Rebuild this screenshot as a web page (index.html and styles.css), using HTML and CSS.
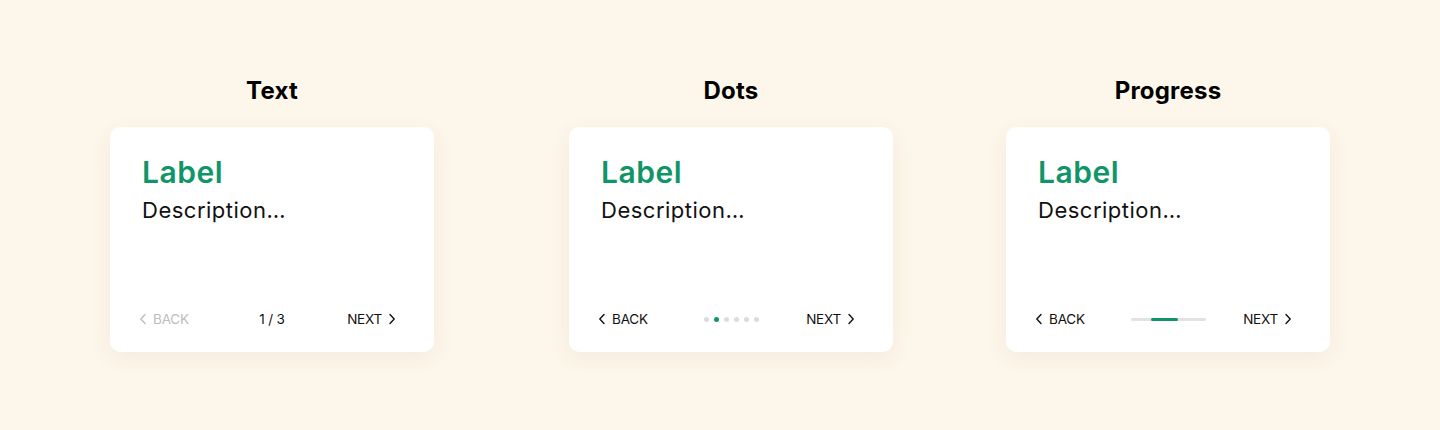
FILE: index.html
```html
<!DOCTYPE html>
<html lang="en">
<head>
<meta charset="utf-8">
<title>Pagination variants</title>
<link rel="stylesheet" href="styles.css">
</head>
<body>
<main class="page">
  <section class="col col-text">
    <h2 class="col-title">Text</h2>
    <div class="card">
      <div class="card-label">Label</div>
      <div class="card-desc">Description…</div>
      <div class="card-footer">
        <button class="nav nav-back is-disabled" type="button">
          <svg class="chev" width="8" height="12" viewBox="0 0 8 12"><polyline points="6,1.5 1.8,6 6,10.5" fill="none" stroke="currentColor" stroke-width="1.4" stroke-linecap="round" stroke-linejoin="round"/></svg>
          <span>BACK</span>
        </button>
        <div class="pager-text">1 / 3</div>
        <button class="nav nav-next" type="button">
          <span>NEXT</span>
          <svg class="chev" width="8" height="12" viewBox="0 0 8 12"><polyline points="2,1.5 6.2,6 2,10.5" fill="none" stroke="currentColor" stroke-width="1.4" stroke-linecap="round" stroke-linejoin="round"/></svg>
        </button>
      </div>
    </div>
  </section>

  <section class="col col-dots">
    <h2 class="col-title">Dots</h2>
    <div class="card">
      <div class="card-label">Label</div>
      <div class="card-desc">Description…</div>
      <div class="card-footer">
        <button class="nav nav-back" type="button">
          <svg class="chev" width="8" height="12" viewBox="0 0 8 12"><polyline points="6,1.5 1.8,6 6,10.5" fill="none" stroke="currentColor" stroke-width="1.4" stroke-linecap="round" stroke-linejoin="round"/></svg>
          <span>BACK</span>
        </button>
        <div class="pager-dots">
          <span class="dot"></span>
          <span class="dot is-active"></span>
          <span class="dot"></span>
          <span class="dot"></span>
          <span class="dot"></span>
          <span class="dot"></span>
        </div>
        <button class="nav nav-next" type="button">
          <span>NEXT</span>
          <svg class="chev" width="8" height="12" viewBox="0 0 8 12"><polyline points="2,1.5 6.2,6 2,10.5" fill="none" stroke="currentColor" stroke-width="1.4" stroke-linecap="round" stroke-linejoin="round"/></svg>
        </button>
      </div>
    </div>
  </section>

  <section class="col col-progress">
    <h2 class="col-title">Progress</h2>
    <div class="card">
      <div class="card-label">Label</div>
      <div class="card-desc">Description…</div>
      <div class="card-footer">
        <button class="nav nav-back" type="button">
          <svg class="chev" width="8" height="12" viewBox="0 0 8 12"><polyline points="6,1.5 1.8,6 6,10.5" fill="none" stroke="currentColor" stroke-width="1.4" stroke-linecap="round" stroke-linejoin="round"/></svg>
          <span>BACK</span>
        </button>
        <div class="pager-progress">
          <span class="progress-fill"></span>
        </div>
        <button class="nav nav-next" type="button">
          <span>NEXT</span>
          <svg class="chev" width="8" height="12" viewBox="0 0 8 12"><polyline points="2,1.5 6.2,6 2,10.5" fill="none" stroke="currentColor" stroke-width="1.4" stroke-linecap="round" stroke-linejoin="round"/></svg>
        </button>
      </div>
    </div>
  </section>
</main>
</body>
</html>
```

FILE: styles.css
```css
* {
  box-sizing: border-box;
}

html, body {
  margin: 0;
  padding: 0;
}

body {
  width: 1440px;
  height: 430px;
  background: #fdf6ea;
  font-family: Inter, "Noto Sans", "DejaVu Sans", sans-serif;
  color: #111;
  overflow: hidden;
}

.page {
  display: flex;
  align-items: flex-start;
  padding: 76px 0 0 110px;
}

.col {
  display: flex;
  flex-direction: column;
  align-items: center;
  width: 324px;
}

.col-dots {
  margin-left: 135px;
}

.col-progress {
  margin-left: 113px;
}

.col-title {
  margin: 0 0 21px;
  font-size: 24px;
  line-height: 30px;
  font-weight: 700;
  color: #000;
  letter-spacing: 0.2px;
}

.card {
  width: 324px;
  height: 225px;
  background: #fff;
  border-radius: 10px;
  box-shadow: 0 6px 22px rgba(120, 90, 40, 0.07);
  display: flex;
  flex-direction: column;
  padding: 27px 31px 23px 31px;
}

.card-label {
  margin-left: 1px;
  font-size: 30px;
  line-height: 36px;
  font-weight: 600;
  color: #0f9567;
  letter-spacing: 0.5px;
}

.card-desc {
  margin-left: 1px;
  margin-top: 6px;
  font-size: 22px;
  line-height: 28px;
  font-weight: 400;
  color: #111;
  letter-spacing: 0.5px;
}

.card-footer {
  margin-top: auto;
  height: 20px;
  display: grid;
  grid-template-columns: 1fr auto 1fr;
  align-items: center;
}

.nav {
  display: flex;
  align-items: center;
  gap: 6px;
  padding: 0;
  border: 0;
  background: none;
  font-family: inherit;
  font-size: 13.5px;
  line-height: 20px;
  color: #111;
  letter-spacing: -0.2px;
  cursor: pointer;
}

.nav-back {
  justify-self: start;
  margin-left: -2px;
}

.nav-next {
  justify-self: end;
  margin-right: 7px;
}

.nav.is-disabled {
  color: #bdbdbd;
}

.chev {
  display: block;
  flex: none;
}

.pager-text {
  font-size: 13.5px;
  line-height: 20px;
  color: #111;
  letter-spacing: -0.2px;
}

.pager-dots {
  display: flex;
  align-items: center;
  gap: 5px;
}

.dot {
  width: 5px;
  height: 5px;
  border-radius: 50%;
  background: #dcdcdc;
}

.dot.is-active {
  background: #0f9567;
}

.pager-progress {
  width: 75px;
  height: 3px;
  background: #e2e2e2;
  border-radius: 2px;
  display: flex;
  padding-left: 20px;
}

.progress-fill {
  width: 27px;
  height: 3px;
  background: #0f9567;
  border-radius: 2px;
}
```
